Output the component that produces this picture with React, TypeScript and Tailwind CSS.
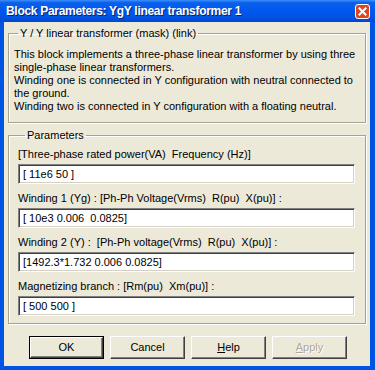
import React from 'react';

const font = { fontFamily: '"Liberation Sans", Arial, sans-serif' };

const fields = [
  { label: '[Three-phase rated power(VA)  Frequency (Hz)]', value: '[ 11e6 50 ]' },
  { label: 'Winding 1 (Yg) : [Ph-Ph Voltage(Vrms)  R(pu)  X(pu)] :', value: '[ 10e3 0.006  0.0825]' },
  { label: 'Winding 2 (Y) :  [Ph-Ph voltage(Vrms)  R(pu)  X(pu)] :', value: '[1492.3*1.732 0.006 0.0825]' },
  { label: 'Magnetizing branch : [Rm(pu)  Xm(pu)] :', value: '[ 500 500 ]' },
];

const XButton: React.FC<{ children: React.ReactNode; isDefault?: boolean; disabled?: boolean }> = ({
  children,
  isDefault,
  disabled,
}) => (
  <div className={`w-[75px] h-[23px] ${isDefault ? 'border border-black' : ''}`}>
    <div
      className={`h-full flex items-center justify-center bg-[#ece9d8] border-t border-l border-t-white border-l-white border-b border-r border-b-[#404040] border-r-[#404040] shadow-[inset_-1px_-1px_0_#808080] text-[11px] leading-[13px] ${
        disabled ? 'text-[#aca899] [text-shadow:1px_1px_0_#fff]' : 'text-black'
      }`}
    >
      {children}
    </div>
  </div>
);

export default function App() {
  return (
    <div className="w-[375px] h-[370px] flex flex-col bg-[#0054e3] select-none" style={font}>
      {/* title bar */}
      <div className="h-[22px] shrink-0 flex items-center justify-between pl-[6px] pr-[5px] bg-[linear-gradient(to_bottom,#3d8ffa_0%,#0b61ec_12%,#0058ee_45%,#0053e2_80%,#0045d2_100%)]">
        <span className="text-white font-bold text-[12px] leading-[14px] tracking-[-0.3px] [text-shadow:1px_1px_0_#0a246a]">
          Block Parameters: YgY linear transformer 1
        </span>
        <div className="w-[15px] h-[15px] shrink-0 rounded-[3px] border border-white bg-[#e0451f] flex items-center justify-center">
          <svg width="9" height="9" viewBox="0 0 9 9">
            <path d="M1.5 1.5 L7.5 7.5 M7.5 1.5 L1.5 7.5" stroke="#ffffff" strokeWidth="2" strokeLinecap="square" />
          </svg>
        </div>
      </div>

      {/* body */}
      <div className="flex-1 ml-[4px] mr-[5px] mb-[4px] bg-[#ece9d8] px-[4px] flex flex-col">
        <fieldset className="mt-[5px] border border-[#a5a291] shadow-[inset_1px_1px_0_#fff,1px_1px_0_#fff] pl-[5px] pr-[4px] pt-[8px] pb-[9px] text-[11px] leading-[13px] text-black">
          <legend className="ml-[4px] px-[2px] leading-[13px]">Y / Y linear transformer (mask) (link)</legend>
          <p>This block implements a three-phase linear transformer by using three single-phase linear transformers.</p>
          <p>Winding one is connected in Y configuration with neutral connected to the ground.</p>
          <p>Winding two is connected in Y configuration with a floating neutral.</p>
        </fieldset>

        <fieldset className="mt-[6px] border border-[#a5a291] shadow-[inset_1px_1px_0_#fff,1px_1px_0_#fff] pl-[9px] pr-[10px] pt-[6px] pb-[7px] text-[11px] leading-[13px] text-black">
          <legend className="ml-[7px] px-[2px] leading-[13px]">Parameters</legend>
          <div className="flex flex-col gap-[8px]">
            {fields.map((f) => (
              <div key={f.label} className="flex flex-col gap-[3px]">
                <span className="whitespace-pre">{f.label}</span>
                <div className="h-[20px] flex items-center bg-white border-t border-l border-t-[#808080] border-l-[#808080] border-b border-r border-b-white border-r-white shadow-[inset_1px_1px_0_#404040,inset_-1px_-1px_0_#d4d0c8] pl-[4px] whitespace-pre">
                  {f.value}
                </div>
              </div>
            ))}
          </div>
        </fieldset>

        <div className="mt-[12px] pl-[21px] flex gap-[6px]">
          <XButton isDefault>OK</XButton>
          <XButton>Cancel</XButton>
          <XButton>
            <span>
              <span className="underline">H</span>elp
            </span>
          </XButton>
          <XButton disabled>
            <span>
              <span className="underline">A</span>pply
            </span>
          </XButton>
        </div>
      </div>
    </div>
  );
}
